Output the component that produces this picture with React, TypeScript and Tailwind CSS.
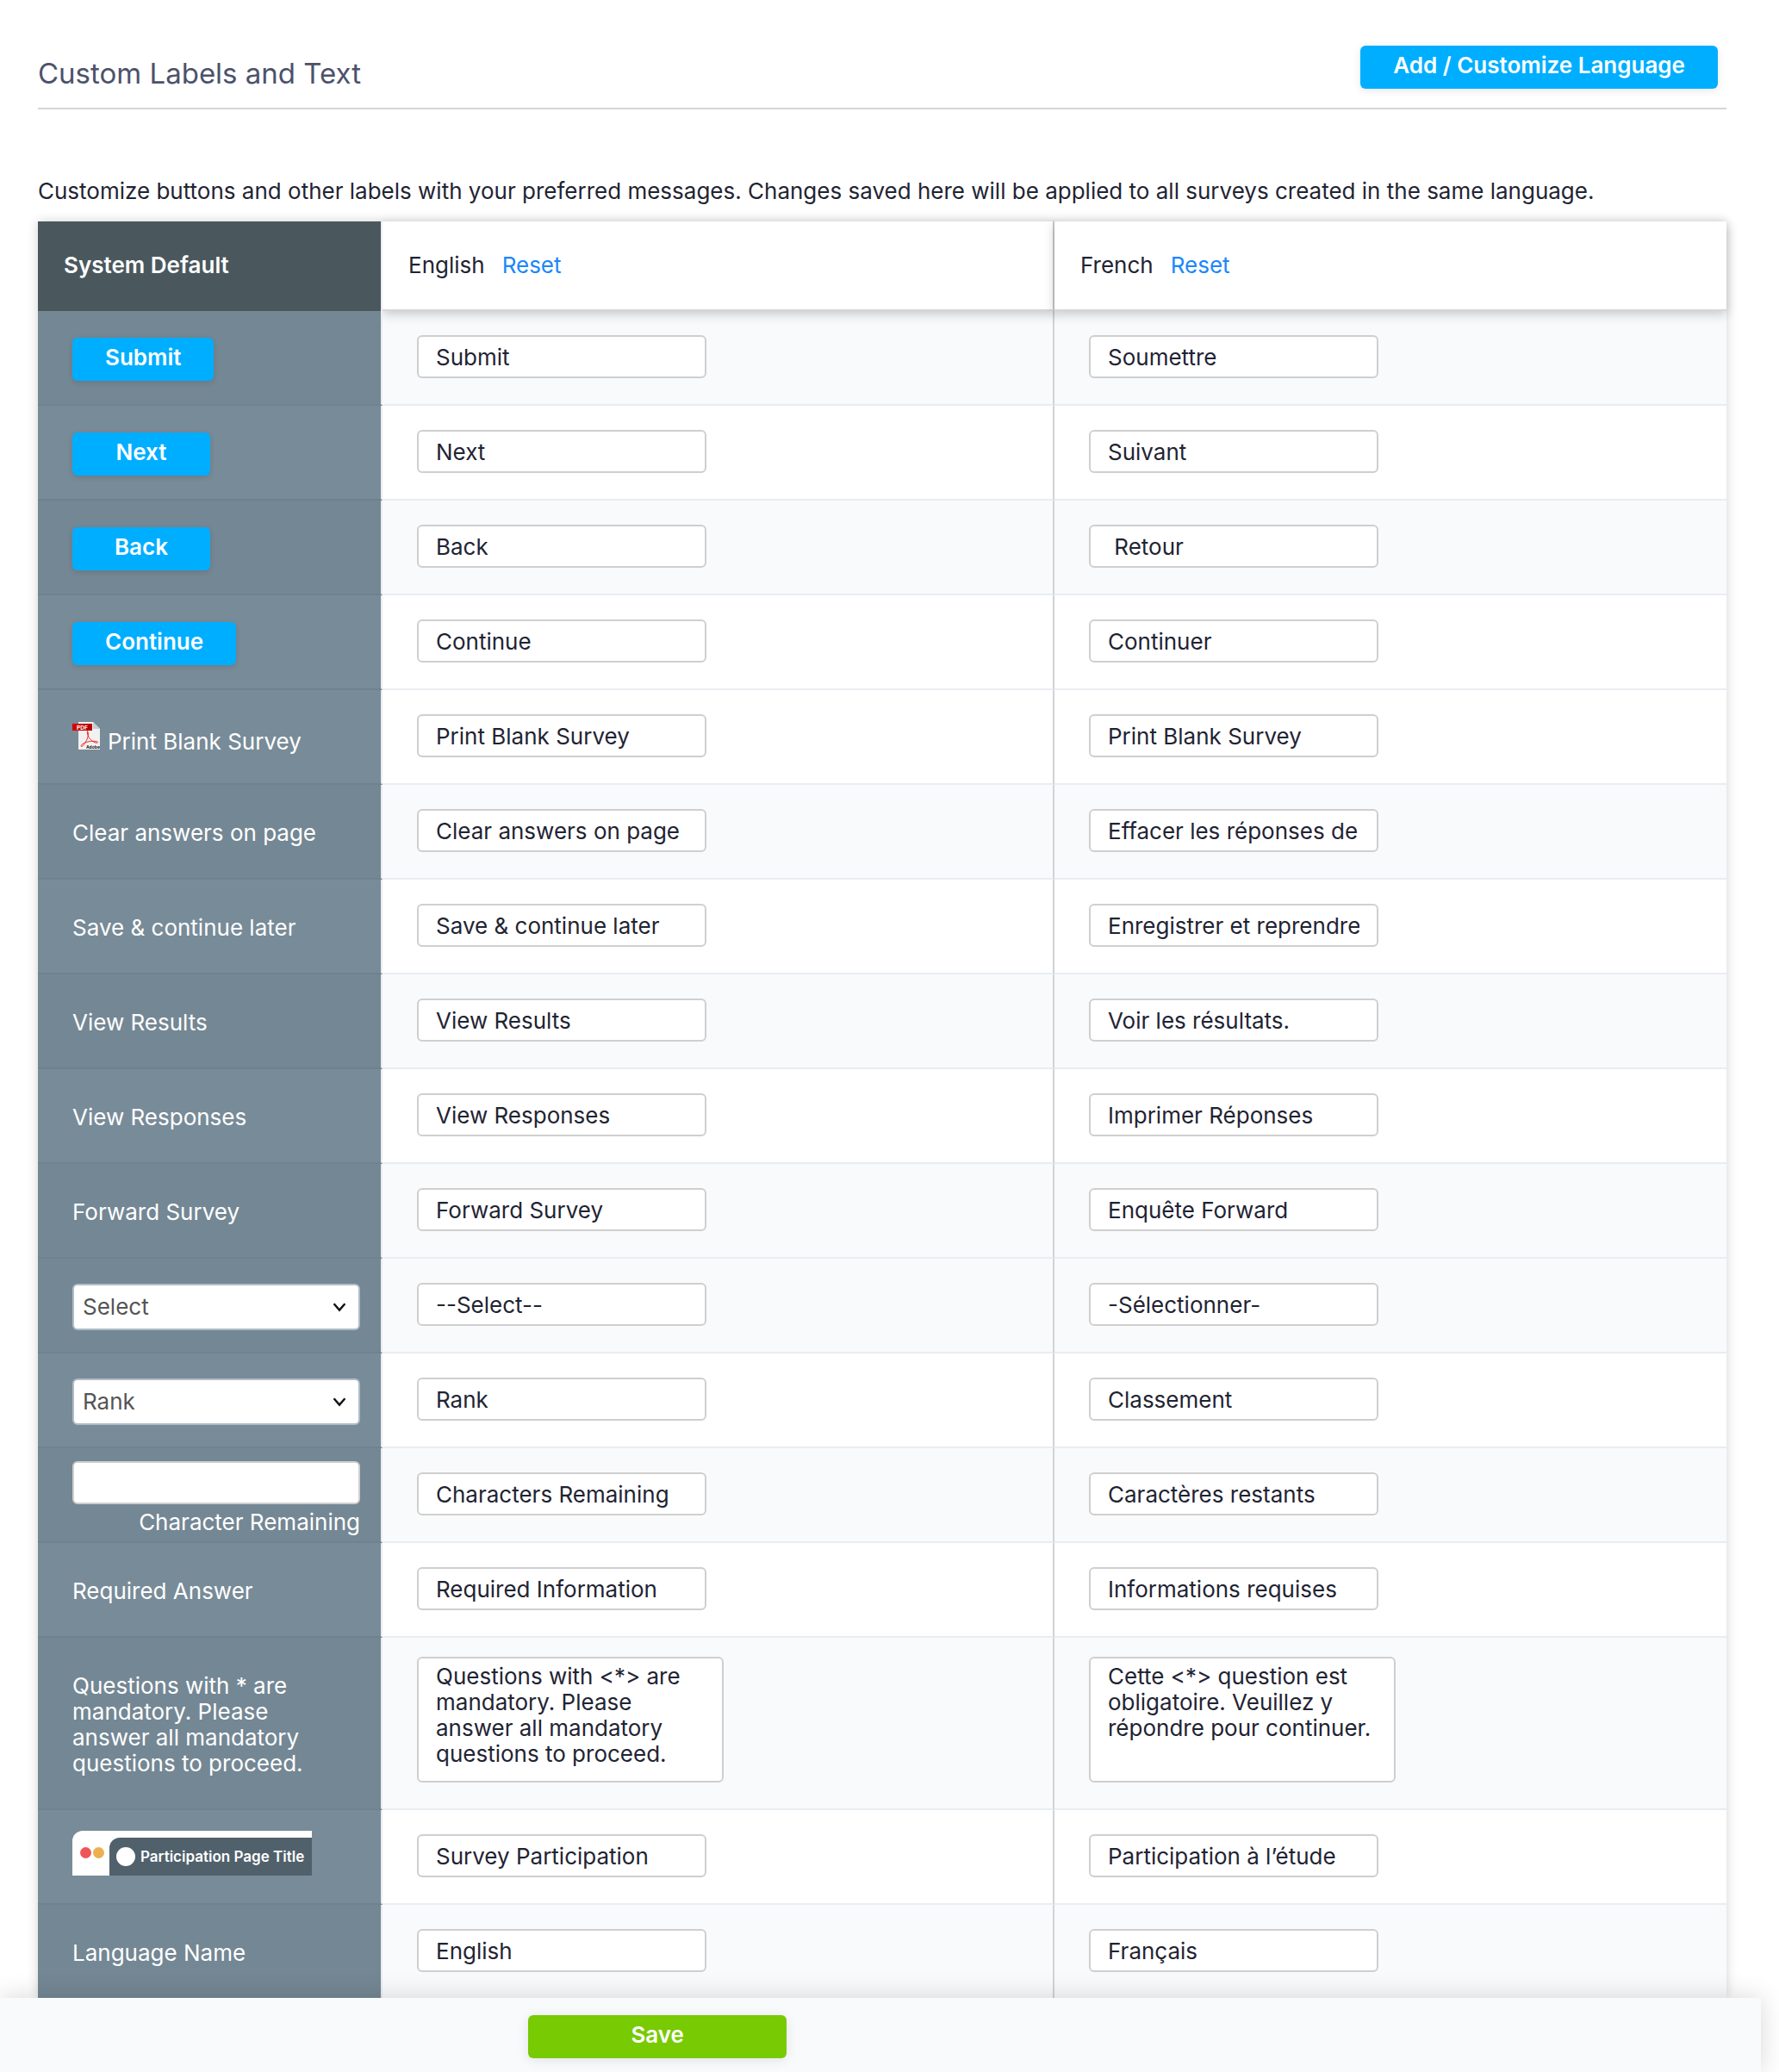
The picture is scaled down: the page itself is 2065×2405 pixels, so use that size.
import type { ReactNode } from 'react';
import clsx from 'clsx';

type Row = {
  name: string;
  label: ReactNode;
  english: string;
  french: string;
  shaded?: boolean;
  multiline?: boolean;
};

const PreviewButton = ({ children }: { children: ReactNode }) => (
  <button
    type="button"
    className="block h-[50px] min-w-[160px] rounded-md bg-[#00aeff] px-[38px] pb-1 font-semibold text-white shadow-[0_2px_6px_rgba(0,0,0,0.12)]"
  >
    {children}
  </button>
);

const PreviewSelect = ({ text }: { text: string }) => (
  <div className="relative">
    <select
      aria-label={`${text} preview`}
      className="block h-[54px] w-full appearance-none rounded-md border-2 border-[#b0bcc6] bg-white pr-10 pl-2.5 text-[#555555]"
    >
      <option>{text}</option>
    </select>
    <svg
      className="pointer-events-none absolute top-[21px] right-4 h-3 w-4"
      viewBox="0 0 16 12"
      fill="none"
      stroke="#111111"
      strokeWidth="2.4"
    >
      <path d="M1.6 2.2 8 9.6l6.4-7.4" />
    </svg>
  </div>
);

const PdfIcon = () => (
  <svg className="h-8 w-8 shrink-0" viewBox="0 0 32 32">
    <path d="M7 0h17l8 8v24H7z" fill="#f1f1f1" />
    <path d="M24 0v8h8z" fill="#c4ccd2" />
    <rect x="0" y="2" width="23" height="8" fill="#b80000" />
    <path d="M0 2h11v8H0z" fill="#d40000" />
    <text x="5" y="8.600" fontSize="6.500" fontWeight="700" fill="#ffffff">
      PDF
    </text>
    <path
      d="M17.500 10.500c1.800 3 .8 6.500-.5 9.500-1.700 4-4.500 8.500-6.500 8.500-1.800-1 2-4.200 7-5.400 4.500-1.100 12-1.200 12 .6-1 1.600-5-.2-8-3-3-2.800-4.700-7-4-10.200z"
      fill="none"
      stroke="#ee2a24"
      strokeWidth="1"
    />
    <text x="16" y="31" fontSize="5" fontWeight="700" fill="#222222">
      Adobe
    </text>
  </svg>
);

const PageTitlePreview = () => (
  <div className="pb-3">
    <div className="flex h-[52px] w-[278px] rounded-tl-xl bg-white pt-2">
      <div className="flex w-[43px] shrink-0 items-center gap-0.5 pb-2 pl-[9px]">
        <span className="size-[13px] rounded-full bg-[#ee5656]" />
        <span className="size-[13px] rounded-full bg-[#ecb050]" />
      </div>
      <div className="flex flex-1 items-center gap-1.5 rounded-tl-xl bg-[#50616c] pl-2 text-[17px] font-semibold whitespace-nowrap text-white">
        <span className="size-[22px] shrink-0 rounded-full bg-white" />
        Participation Page Title
      </div>
    </div>
  </div>
);

const rows: Row[] = [
  { name: 'Submit', label: <PreviewButton>Submit</PreviewButton>, english: 'Submit', french: 'Soumettre', shaded: true },
  { name: 'Next', label: <PreviewButton>Next</PreviewButton>, english: 'Next', french: 'Suivant' },
  { name: 'Back', label: <PreviewButton>Back</PreviewButton>, english: 'Back', french: ' Retour', shaded: true },
  { name: 'Continue', label: <PreviewButton>Continue</PreviewButton>, english: 'Continue', french: 'Continuer' },
  {
    name: 'Print Blank Survey',
    label: (
      <div className="flex items-baseline gap-[9px]">
        <PdfIcon />
        Print Blank Survey
      </div>
    ),
    english: 'Print Blank Survey',
    french: 'Print Blank Survey',
  },
  { name: 'Clear answers', label: 'Clear answers on page', english: 'Clear answers on page', french: 'Effacer les réponses de', shaded: true },
  { name: 'Save & continue', label: 'Save & continue later', english: 'Save & continue later', french: 'Enregistrer et reprendre' },
  { name: 'View Results', label: 'View Results', english: 'View Results', french: 'Voir les résultats.', shaded: true },
  { name: 'View Responses', label: 'View Responses', english: 'View Responses', french: 'Imprimer Réponses' },
  { name: 'Forward Survey', label: 'Forward Survey', english: 'Forward Survey', french: 'Enquête Forward', shaded: true },
  { name: 'Select', label: <PreviewSelect text="Select" />, english: '--Select--', french: '-Sélectionner-', shaded: true },
  { name: 'Rank', label: <PreviewSelect text="Rank" />, english: 'Rank', french: 'Classement' },
  {
    name: 'Characters Remaining',
    label: (
      <div className="pt-1">
        <input
          id="char-preview"
          className="block h-[50px] w-full rounded-md border-2 border-[#cfcfcf] bg-white px-5"
        />
        <label htmlFor="char-preview" className="mt-1.5 block text-right">
          Character Remaining
        </label>
      </div>
    ),
    english: 'Characters Remaining',
    french: 'Caractères restants',
    shaded: true,
  },
  { name: 'Required Answer', label: 'Required Answer', english: 'Required Information', french: 'Informations requises' },
  {
    name: 'Mandatory message',
    label: (
      <p className="max-w-[280px]">
        Questions with * are mandatory. Please answer all mandatory questions to proceed.
      </p>
    ),
    english: 'Questions with <*> are mandatory. Please answer all mandatory questions to proceed.',
    french: 'Cette <*> question est obligatoire. Veuillez y répondre pour continuer.',
    shaded: true,
    multiline: true,
  },
  { name: 'Page Title', label: <PageTitlePreview />, english: 'Survey Participation', french: 'Participation à l’étude' },
  { name: 'Language Name', label: 'Language Name', english: 'English', french: 'Français', shaded: true },
];

const LabelField = ({ name, value, multiline }: { name: string; value: string; multiline?: boolean }) =>
  multiline ? (
    <textarea
      aria-label={name}
      defaultValue={value}
      className="block h-[146px] w-[356px] resize-none overflow-hidden rounded-md border-2 border-[#cfcfcf] bg-white px-5 py-1.5 leading-[30px]"
    />
  ) : (
    <input
      aria-label={name}
      defaultValue={value}
      className="block h-[50px] w-[336px] rounded-md border-2 border-[#cfcfcf] bg-white px-5"
    />
  );

const App = () => {
  return (
    <div className="min-h-screen bg-white font-['Inter','Liberation_Sans',sans-serif] text-[26px] leading-[30px] text-[#1f2433]">
      <main className="pt-[53px] pr-[61px] pl-11">
        <header className="flex items-end justify-between border-b-2 border-[#d6d6d6] pr-2.5 pb-[22px]">
          <h1 className="text-[33px] leading-9 text-[#4c526b]">Custom Labels and Text</h1>
          <button
            type="button"
            className="h-[50px] rounded-md bg-[#00aeff] px-[38px] pb-1 font-semibold text-white shadow-[0_2px_10px_rgba(0,0,0,0.1)]"
          >
            Add / Customize Language
          </button>
        </header>

        <p className="mt-20">
          Customize buttons and other labels with your preferred messages. Changes saved here will be applied to all
          surveys created in the same language.
        </p>

        <table className="mt-5 w-full table-fixed border-separate border-spacing-0 text-left shadow-[0_0_12px_rgba(0,0,0,0.18)]">
          <colgroup>
            <col className="w-[400px]" />
            <col />
            <col />
          </colgroup>
          <thead>
            <tr>
              <th className="relative z-10 h-[104px] border-r-2 border-[#e9edf1] bg-[#4a585e] bg-clip-padding pr-4 pb-0.5 pl-[30px] font-semibold text-white">
                System Default
              </th>
              <th className="relative border-r-2 border-b-2 border-r-[#c8c8c8] border-b-[#d6d6d6] bg-white px-[30px] font-normal shadow-[0_4px_12px_rgba(0,0,0,0.2)]">
                English
                <a href="#reset-english" className="ml-5 text-[#1b87fb]">
                  Reset
                </a>
              </th>
              <th className="relative border-b-2 border-b-[#d6d6d6] bg-white px-[30px] font-normal shadow-[0_4px_12px_rgba(0,0,0,0.2)]">
                French
                <a href="#reset-french" className="ml-5 text-[#1b87fb]">
                  Reset
                </a>
              </th>
            </tr>
          </thead>
          <tbody>
            {rows.map((row, i) => {
              const last = i === rows.length - 1;
              const height = row.multiline ? 'h-[200px]' : last ? 'h-[108px]' : 'h-[110px]';
              const cell = clsx(
                'align-top pl-10',
                row.multiline ? 'pt-[22px]' : 'pt-7',
                row.shaded ? 'bg-[#f9fafc]' : 'bg-white',
                !last && 'border-b-2 border-b-[#e9edf1]'
              );
              return (
                <tr key={row.name}>
                  <td
                    className={clsx(
                      'relative z-10 border-r-2 border-r-[#e9edf1] bg-clip-padding pt-[3px] pr-6 pl-10 align-middle text-white',
                      height,
                      row.shaded ? 'bg-[#748794]' : 'bg-[#788b98]',
                      !last && 'border-b-2 border-b-[#6f828f]'
                    )}
                  >
                    {row.label}
                  </td>
                  <td className={clsx(cell, 'border-r-2 border-r-[#d0d3d6]')}>
                    <LabelField name={`${row.name} (English)`} value={row.english} multiline={row.multiline} />
                  </td>
                  <td className={cell}>
                    <LabelField name={`${row.name} (French)`} value={row.french} multiline={row.multiline} />
                  </td>
                </tr>
              );
            })}
          </tbody>
        </table>
      </main>

      <footer className="relative z-20 mr-[21px] bg-[#f9fafc] pt-5 pb-4 shadow-[0_0_30px_rgba(0,0,0,0.16)]">
        <button
          type="button"
          className="ml-[30%] block h-[50px] w-[300px] rounded-md bg-[#78ca03] pb-1 font-semibold text-white shadow-[0_2px_14px_rgba(0,0,0,0.1)]"
        >
          Save
        </button>
      </footer>
    </div>
  );
};

export default App;
